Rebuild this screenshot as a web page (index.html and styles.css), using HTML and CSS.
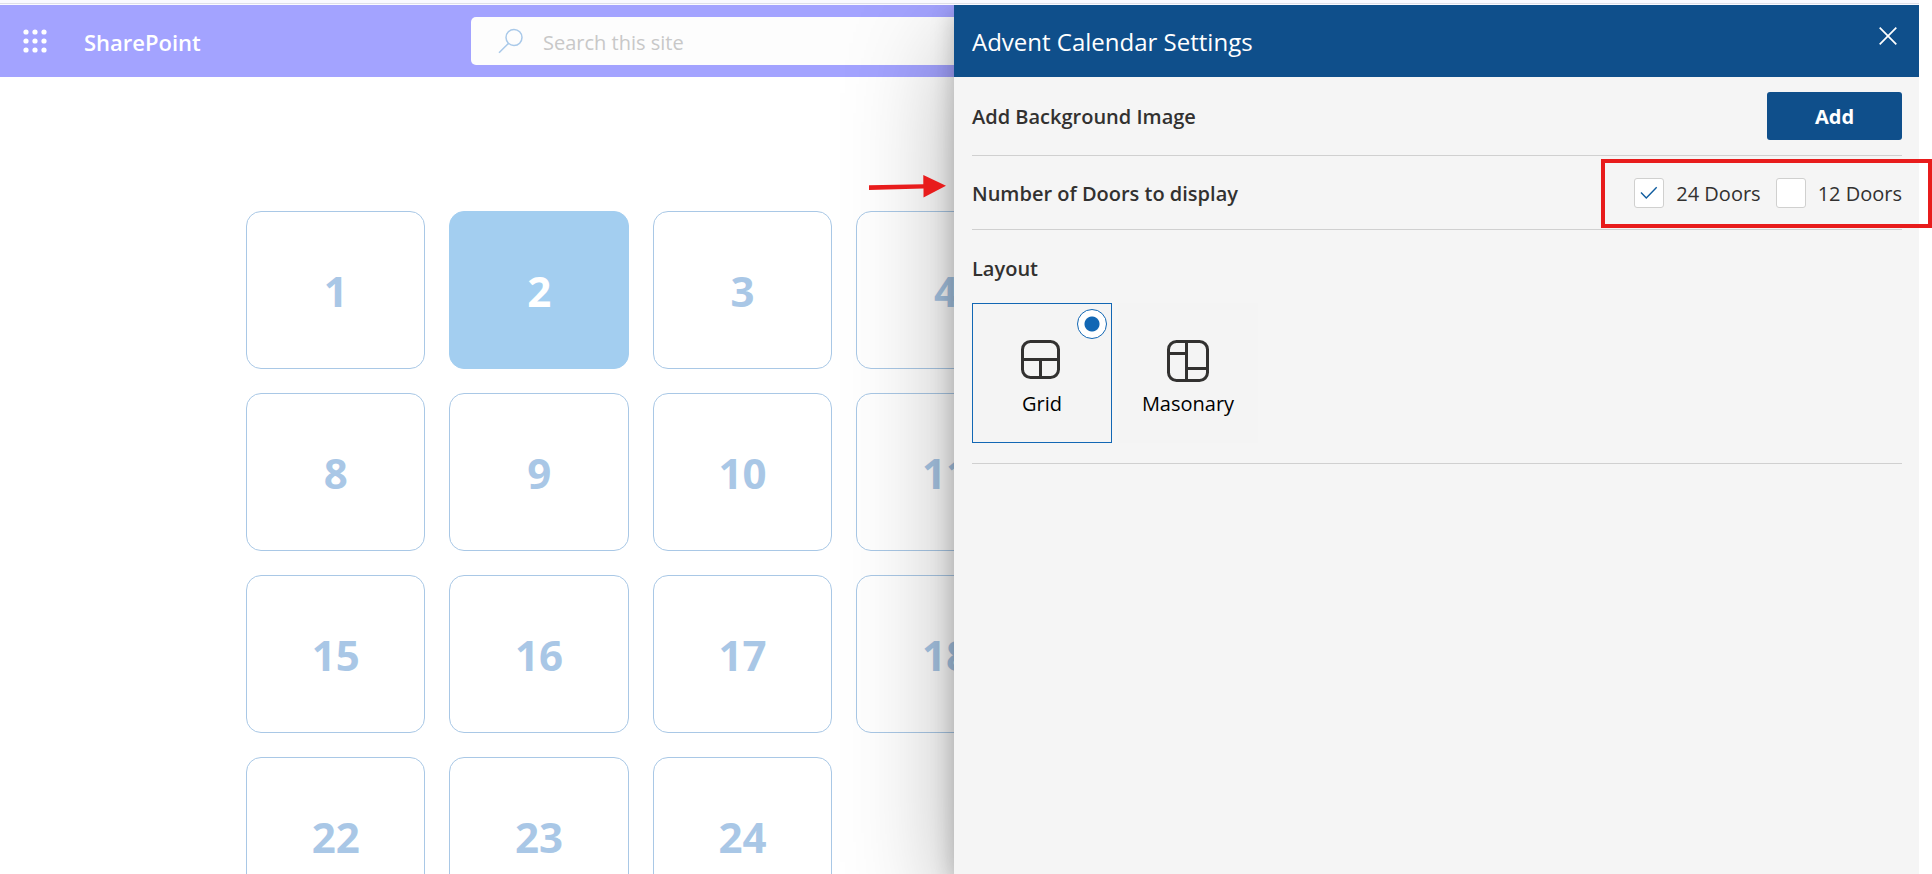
FILE: index.html
```html
<!DOCTYPE html>
<html lang="en">
<head>
<meta charset="utf-8">
<title>Advent Calendar Settings</title>
<link rel="stylesheet" href="styles.css">
</head>
<body>
<div class="browser-edge"></div>
<div class="app">
  <header class="suite-bar">
    <button class="launcher" type="button" aria-label="App launcher">
      <svg width="24" height="24" viewBox="0 0 24 24" fill="#fff">
        <circle cx="3" cy="3" r="2.6"/><circle cx="12" cy="3" r="2.6"/><circle cx="21" cy="3" r="2.6"/>
        <circle cx="3" cy="12" r="2.6"/><circle cx="12" cy="12" r="2.6"/><circle cx="21" cy="12" r="2.6"/>
        <circle cx="3" cy="21" r="2.6"/><circle cx="12" cy="21" r="2.6"/><circle cx="21" cy="21" r="2.6"/>
      </svg>
    </button>
    <a class="brand" href="#">SharePoint</a>
    <label class="search">
      <svg width="26" height="26" viewBox="0 0 26 26" fill="none" stroke="#a9c9e9" stroke-width="1.5">
        <circle cx="16" cy="9.5" r="8"/><path d="M10.6 15.2 1 24.8"/>
      </svg>
      <input class="search-input" type="search" placeholder="Search this site" aria-label="Search this site">
    </label>
  </header>

  <main class="doors">
    <button class="door" type="button">1</button>
    <button class="door door-open" type="button">2</button>
    <button class="door" type="button">3</button>
    <button class="door" type="button">4</button>
    <button class="door" type="button">5</button>
    <button class="door" type="button">6</button>
    <button class="door" type="button">7</button>
    <button class="door" type="button">8</button>
    <button class="door" type="button">9</button>
    <button class="door" type="button">10</button>
    <button class="door" type="button">11</button>
    <button class="door" type="button">12</button>
    <button class="door" type="button">13</button>
    <button class="door" type="button">14</button>
    <button class="door" type="button">15</button>
    <button class="door" type="button">16</button>
    <button class="door" type="button">17</button>
    <button class="door" type="button">18</button>
    <button class="door" type="button">19</button>
    <button class="door" type="button">20</button>
    <button class="door" type="button">21</button>
    <button class="door" type="button">22</button>
    <button class="door" type="button">23</button>
    <button class="door" type="button">24</button>
  </main>

  <aside class="panel">
    <div class="panel-head">
      <h1 class="panel-title">Advent Calendar Settings</h1>
      <button class="close" type="button" aria-label="Close">
        <svg width="18" height="18" viewBox="0 0 18 18" fill="none" stroke="#fff" stroke-width="1.7"><path d="M.7.7l16.6 16.6M17.3.7.7 17.3"/></svg>
      </button>
    </div>
    <div class="panel-body">
      <section class="row">
        <h2 class="row-title">Add Background Image</h2>
        <button class="add" type="button">Add</button>
      </section>
      <section class="row">
        <h2 class="row-title">Number of Doors to display</h2>
        <div class="choices">
          <label class="choice"><span class="tick"><input class="tick-box" type="checkbox" checked><svg class="tick-mark" width="18" height="14" viewBox="0 0 18 14" fill="none" stroke="#0f5c9f" stroke-width="1.4"><path d="M1 6.5l5.3 5.6L16.7 1.3"/></svg></span><span class="choice-text">24 Doors</span></label>
          <label class="choice"><span class="tick"><input class="tick-box" type="checkbox"></span><span class="choice-text">12 Doors</span></label>
        </div>
      </section>
      <section class="layout">
        <h2 class="row-title">Layout</h2>
        <div class="options">
          <label class="option">
            <input class="option-radio" type="radio" name="layout" checked>
            <svg class="option-icon" width="42" height="42" viewBox="0 0 42 42" fill="none" stroke="#323130" stroke-width="3">
              <rect x="1.5" y="1.5" width="36" height="36" rx="8"/><path d="M1.5 19.5h36M19.5 19.5v18"/>
            </svg>
            Grid
          </label>
          <label class="option">
            <input class="option-radio" type="radio" name="layout">
            <svg class="option-icon" width="42" height="42" viewBox="0 0 42 42" fill="none" stroke="#323130" stroke-width="3">
              <rect x="1.5" y="1.5" width="39" height="39" rx="8"/><path d="M19.5 1.5v39M1.5 13.5h18M19.5 28.5h21"/>
            </svg>
            Masonary
          </label>
        </div>
      </section>
    </div>
  </aside>
</div>
<svg class="callout-arrow" width="78" height="24" viewBox="0 0 78 24" fill="#e81c1c"><path d="M0 10.3 54.3 9.2V0L77 10.8 54.5 22.4V13.6L0 15z"/></svg>
<div class="callout-box"></div>
</body>
</html>
```

FILE: styles.css
```css
* {
  box-sizing: border-box;
}

body {
  position: relative;
  display: flex;
  flex-direction: column;
  height: 100vh;
  margin: 0;
  overflow: hidden;
  background: #fff;
  font-family: "Open Sans", "Noto Sans", sans-serif;
  font-size: 20px;
  color: #323130;
}

button {
  margin: 0;
  padding: 0;
  border: 0;
  background: none;
  font: inherit;
  color: inherit;
}

svg {
  display: block;
  flex: none;
}

.browser-edge {
  flex: none;
  height: 5px;
  margin-right: 13px;
  background: linear-gradient(#f9f9ff 3px, #dfdfe8 3px, #dfdfe8 4px, #fafaff 4px);
}

.app {
  position: relative;
  flex: 1;
  min-height: 0;
  margin-right: 13px;
  overflow: hidden;
}

.suite-bar {
  display: flex;
  align-items: center;
  height: 72px;
  padding-left: 23px;
  background: #a3a3ff;
}

.launcher {
  margin-right: 37px;
}

.brand {
  width: 387px;
  padding-top: 2px;
  font-size: 22px;
  font-weight: 600;
  color: #fff;
  text-decoration: none;
}

.search {
  display: flex;
  align-items: center;
  gap: 19px;
  width: 702px;
  height: 48px;
  padding: 0 27px;
  border-radius: 5px;
  background: #fdfdfd;
}

.search-input {
  flex: 1;
  min-width: 0;
  padding: 2px 0 0;
  border: 0;
  outline: 0;
  background: none;
  font: inherit;
}

.search-input::placeholder {
  color: #c8c8c8;
}

.doors {
  display: grid;
  grid-template-columns: repeat(7, 1fr);
  grid-auto-rows: 158px;
  gap: 24px;
  padding: 134px 273px 0 246px;
}

.door {
  border: 1px solid #a9c8e6;
  border-radius: 15px;
  background: #fff;
  font-size: 42px;
  font-weight: 700;
  color: #a9c7e6;
}

.door-open {
  border-color: #a3cef0;
  background: #a3cef0;
  color: #fff;
}

.panel {
  position: absolute;
  top: 0;
  right: 0;
  bottom: 0;
  left: 954px;
  background: #f5f5f5;
  box-shadow: 0 38px 100px rgba(0, 0, 0, 0.3), 0 7px 22px rgba(0, 0, 0, 0.22);
}

.panel-head {
  display: flex;
  align-items: center;
  justify-content: space-between;
  height: 72px;
  padding: 0 22px 0 18px;
  background: #0f4f8b;
  color: #fff;
}

.panel-title {
  margin: 0;
  font-size: 24px;
  font-weight: 400;
}

.close {
  padding-bottom: 10px;
}

.panel-body {
  padding: 0 17px 0 18px;
}

.row {
  display: flex;
  align-items: center;
  justify-content: space-between;
  padding: 15px 0;
  border-bottom: 1px solid #d0d0d0;
}

.row-title {
  margin: 0;
  padding-top: 2px;
  font-size: 20px;
  font-weight: 600;
  line-height: 28px;
}

.add {
  width: 135px;
  height: 48px;
  border-radius: 3px;
  background: #0f4f8b;
  font-size: 20px;
  font-weight: 700;
  color: #fff;
}

.choices {
  display: flex;
  gap: 15px;
  padding: 7px 0 6px;
}

.choice {
  display: flex;
  align-items: center;
  gap: 12px;
}

.choice-text {
  padding-top: 2px;
  line-height: 28px;
}

.tick {
  display: grid;
  place-items: center;
}

.tick-box {
  grid-area: 1 / 1;
  appearance: none;
  width: 30px;
  height: 30px;
  margin: 0;
  border: 1px solid #d0d0cf;
  border-radius: 3px;
  background: #fff;
}

.tick-mark {
  grid-area: 1 / 1;
}

.layout {
  padding: 23px 0 20px;
  border-bottom: 1px solid #d0d0d0;
}

.options {
  display: flex;
  gap: 6px;
  margin-top: 20px;
}

.option {
  position: relative;
  display: flex;
  flex-direction: column;
  align-items: center;
  gap: 8px;
  width: 140px;
  height: 140px;
  padding-top: 36px;
  border: 1px solid transparent;
  background: #f4f4f4;
  line-height: 28px;
  color: #000;
}

.option:has(:checked) {
  border-color: #1267b4;
}

.option-radio {
  position: absolute;
  top: 5px;
  right: 4px;
  appearance: none;
  width: 30px;
  height: 30px;
  margin: 0;
  border: 1px solid #1267b4;
  border-radius: 50%;
  background: radial-gradient(circle, #1267b4 7px, #fff 8px);
}

.option-radio:not(:checked) {
  opacity: 0;
}

.callout-arrow {
  position: absolute;
  top: 175px;
  left: 869px;
}

.callout-box {
  position: absolute;
  top: 159px;
  right: 0;
  width: 331px;
  height: 69px;
  border: 4px solid #e81c1c;
  pointer-events: none;
}
```
